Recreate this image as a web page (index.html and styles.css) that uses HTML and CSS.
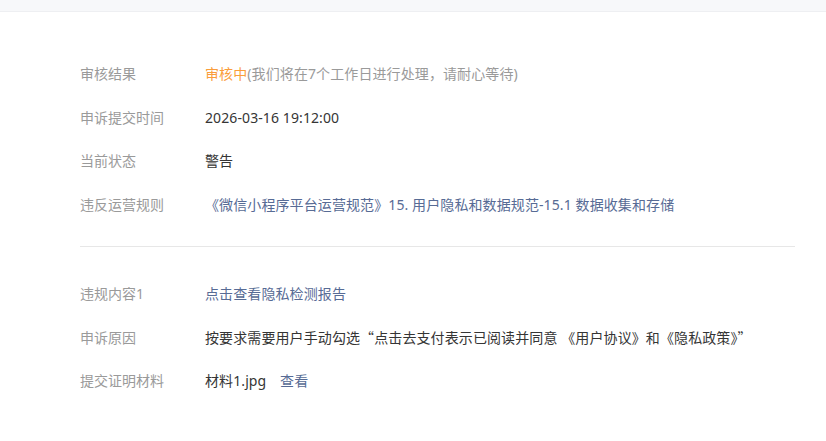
FILE: index.html
```html
<!DOCTYPE html>
<html lang="zh-CN">
<head>
    <meta charset="UTF-8">
    <meta name="viewport" content="width=device-width, initial-scale=1.0">
    <title>申诉详情</title>
    <link rel="stylesheet" href="styles.css">
</head>
<body>

    <div class="topbar"></div>

    <div class="content">
        <div class="group">
            <div class="row">
                <div class="label">审核结果</div>
                <div class="value"><span class="status">审核中</span><span class="hint">(我们将在7个工作日进行处理，请耐心等待)</span></div>
            </div>
            <div class="row">
                <div class="label">申诉提交时间</div>
                <div class="value">2026-03-16 19:12:00</div>
            </div>
            <div class="row">
                <div class="label">当前状态</div>
                <div class="value">警告</div>
            </div>
            <div class="row">
                <div class="label">违反运营规则</div>
                <div class="value"><a href="#" class="link">《微信小程序平台运营规范》15. 用户隐私和数据规范-15.1 数据收集和存储</a></div>
            </div>
        </div>

        <div class="divider"></div>

        <div class="group">
            <div class="row">
                <div class="label">违规内容1</div>
                <div class="value"><a href="#" class="link">点击查看隐私检测报告</a></div>
            </div>
            <div class="row">
                <div class="label">申诉原因</div>
                <div class="value">按要求需要用户手动勾选<span class="cjk">“</span>点击去支付表示已阅读并同意 《用户协议》和《隐私政策》<span class="cjk">”</span></div>
            </div>
            <div class="row">
                <div class="label">提交证明材料</div>
                <div class="value">材料1.jpg <a href="#" class="link view">查看</a></div>
            </div>
        </div>
    </div>

</body>
</html>
```

FILE: styles.css
```css
:root {
    --text: #353535;
    --muted: #9a9a9a;
    --link: #576b95;
    --orange: #fa9d3b;
    --line: #e7e7e7;
}

* {
    margin: 0;
    padding: 0;
    box-sizing: border-box;
}

body {
    background-color: #fff;
    font-family: "Noto Sans", "Noto Sans CJK SC", sans-serif;
    font-size: 14px;
    color: var(--text);
}

.topbar {
    height: 12px;
    background-color: #f7f8fa;
    border-bottom: 1px solid #eeeff2;
}

.content {
    padding: 40px 31px 0 80px;
}

.row {
    display: flex;
    padding: 11px 0;
    line-height: 21.5px;
}

.label {
    width: 125px;
    flex-shrink: 0;
    color: var(--muted);
}

.value {
    color: var(--text);
    letter-spacing: 0.1px;
}

.cjk {
    font-family: "Noto Sans CJK SC", sans-serif;
}

.status {
    color: var(--orange);
}

.hint {
    color: var(--muted);
}

.link {
    color: var(--link);
    text-decoration: none;
}

.view {
    margin-left: 10px;
}

.divider {
    height: 1px;
    background-color: var(--line);
    margin: 20px 0 25px;
}
```
